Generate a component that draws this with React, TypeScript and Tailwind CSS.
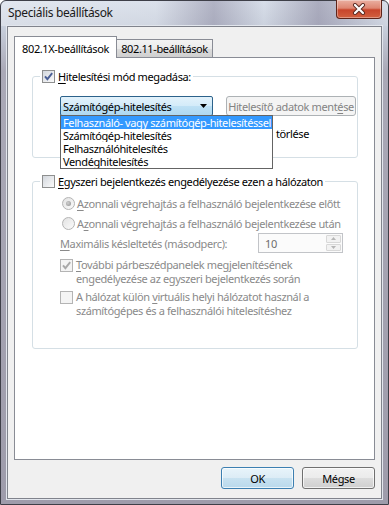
import React from 'react';

const F = "font-['Noto_Sans',sans-serif] text-[11px] tracking-[-0.38px] leading-[15px] whitespace-nowrap";
const GRAY = 'text-[#8a8a8a]';

function Check({ checked, disabled }: { checked?: boolean; disabled?: boolean }) {
  return (
    <span
      className={`flex h-[13px] w-[13px] shrink-0 items-center justify-center border ${
        disabled ? 'border-[#b4b4b4] bg-[#f4f4f4]' : 'border-[#8e8f8f] bg-gradient-to-br from-[#d3d7dd] to-[#fbfbfb]'
      }`}
    >
      {checked && (
        <svg width="11" height="11" viewBox="0 0 11 11">
          <path d="M2 5.3 L4.4 8.2 L9.2 2.2" fill="none" stroke={disabled ? '#a9a9a9' : '#4b5f96'} strokeWidth="1.9" />
        </svg>
      )}
    </span>
  );
}

function Radio({ checked }: { checked?: boolean }) {
  return (
    <span className="flex h-[13px] w-[13px] shrink-0 items-center justify-center rounded-full border border-[#b4b4b4] bg-gradient-to-br from-[#e2e2e2] to-[#fbfbfb]">
      {checked && <span className="h-[5px] w-[5px] rounded-full bg-[radial-gradient(circle_at_40%_40%,#d0d0d0,#8e8e8e)]" />}
    </span>
  );
}

function U({ children }: { children: React.ReactNode }) {
  return <span className="underline underline-offset-[2px]">{children}</span>;
}

export default function App() {
  return (
    <div className={`h-[505px] w-[389px] overflow-hidden text-black ${F}`}>
      <div className="flex h-full flex-col rounded-t-[6px] border border-[#3e3f48] bg-[linear-gradient(180deg,#d5dce8_0px,#c8cfdc_26px,#aaa9b7_70px,#9e9cab_100%)]">
        {/* Title bar */}
        <div className="flex h-[25px] shrink-0 items-start justify-between rounded-t-[6px] bg-[linear-gradient(90deg,rgba(255,255,255,0.3)_0%,rgba(255,255,255,0.15)_40%,rgba(95,85,115,0.3)_55%,rgba(255,255,255,0.05)_68%,rgba(95,85,115,0.35)_82%,rgba(255,255,255,0.1)_100%)]">
          <span className="pl-[7px] pt-[4px] text-[12px] tracking-[-0.35px] text-[#1a1a1a]">Speciális beállítások</span>
          <div className="-mt-px mr-[6px] flex h-[19px] w-[46px] items-center justify-center rounded-b-[4px] border border-t-0 border-[#5e2419] bg-[linear-gradient(180deg,#eab0a2_0%,#de8672_45%,#c8452b_55%,#d2603f_100%)] shadow-[inset_0_0_0_1px_rgba(255,255,255,0.35)]">
            <svg width="14" height="12" viewBox="0 0 14 12">
              <path d="M3 2 L11 10 M11 2 L3 10" stroke="#5a2a22" strokeWidth="4" strokeLinecap="round" />
              <path d="M3 2 L11 10 M11 2 L3 10" stroke="#ffffff" strokeWidth="2.2" strokeLinecap="round" />
            </svg>
          </div>
        </div>

        {/* Client area */}
        <div className="mx-[6px] mb-[5px] flex flex-1 flex-col border border-[#80838c] bg-[#f0f0f0] shadow-[0_0_0_1px_#e2e6ed]">
          {/* Tabs */}
          <div className="flex h-[30px] shrink-0 items-end pl-[6px]">
            <div className="relative z-10 -mb-px h-[22px] w-[103px] border border-b-0 border-[#898c95] bg-white pt-[4px] text-center">
              802.1X-beállítások
            </div>
            <div className="h-[18px] w-[96px] border border-b-0 border-l-0 border-[#898c95] bg-[linear-gradient(180deg,#f3f3f3_0%,#ebebeb_50%,#dddddd_50%,#cfcfcf_100%)] pt-[1px] text-center">
              802.11-beállítások
            </div>
          </div>

          {/* Tab panel */}
          <div className="mx-[6px] h-[403px] shrink-0 border border-[#898c95] bg-white">
            {/* Group 1 */}
            <fieldset className="ml-[17px] mt-[11px] h-[89px] w-[326px] rounded-[3px] border border-[#d5dfe5] pl-[7px]">
              <legend className="flex h-[15px] items-center gap-[3px] px-[2px]">
                <Check checked />
                <span>
                  <U>H</U>itelesítési mód megadása:
                </span>
              </legend>
              <div className="ml-[20px] mt-[12px] flex items-start">
                <div className="relative z-10">
                  <div className="flex h-[20px] w-[153px] items-center justify-between rounded-[2px] border border-[#2c628b] bg-[linear-gradient(180deg,#e3f2fb_0%,#d3ebf9_50%,#bfe1f5_50%,#aed8f1_100%)] pl-[2px] pr-[5px]">
                    <span>Számítógép-hitelesítés</span>
                    <svg width="7" height="4" viewBox="0 0 7 4">
                      <path d="M0 0 H7 L3.5 4 Z" fill="#000" />
                    </svg>
                  </div>
                  <div className="absolute left-0 top-[19px] w-[213px] border border-[#646464] bg-white">
                    <div className="h-[13px] overflow-hidden bg-[#3399ff] pl-[2px] leading-[13px] text-white">Felhasználó- vagy számítógép-hitelesítéssel</div>
                    <div className="h-[13px] overflow-hidden pl-[2px] leading-[13px]">Számítógép-hitelesítés</div>
                    <div className="h-[13px] overflow-hidden pl-[2px] leading-[13px]">Felhasználóhitelesítés</div>
                    <div className="h-[13px] overflow-hidden pl-[2px] leading-[13px]">Vendéghitelesítés</div>
                  </div>
                </div>
                <div className="ml-[13px] flex h-[20px] w-[130px] items-center justify-center rounded-[3px] border border-[#adb2b5] bg-[#f4f4f4] text-[#838383]">
                  <span>
                    Hitelesítő adatok ment<U>é</U>se
                  </span>
                </div>
              </div>
              {/* only the end of this row shows past the open list */}
              <div className="ml-[20px] mt-[10px] flex w-[249px] justify-end">
                <span>törlése</span>
              </div>
            </fieldset>

            {/* Group 2 */}
            <fieldset className="ml-[17px] mt-[16px] h-[175px] w-[326px] rounded-[3px] border border-[#d5dfe5] pl-[7px]">
              <legend className="flex h-[15px] items-center gap-[3px] px-[2px]">
                <Check />
                <span>
                  <U>E</U>gyszeri bejelentkezés engedélyezése ezen a hálózaton
                </span>
              </legend>
              <div className={`ml-[22px] mt-[4px] flex h-[20px] items-center gap-[2px] ${GRAY}`}>
                <Radio checked />
                <span>
                  <U>A</U>zonnali végrehajtás a felhasználó bejelentkezése előtt
                </span>
              </div>
              <div className={`ml-[22px] flex h-[20px] items-center gap-[2px] ${GRAY}`}>
                <Radio />
                <span>
                  A<U>z</U>onnali végrehajtás a felhasználó bejelentkezése után
                </span>
              </div>
              <div className={`ml-[20px] flex h-[20px] items-center ${GRAY}`}>
                <span className="w-[198px]">
                  <U>M</U>aximális késleltetés (másodperc):
                </span>
                <div className="flex h-[20px] w-[85px] items-stretch border border-[#c2c4c8] bg-[#fbfbfb]">
                  <span className="flex flex-1 items-center pl-[6px] text-[#6d6d6d]">10</span>
                  <div className="flex w-[16px] flex-col gap-px py-px pr-px">
                    <div className="flex flex-1 items-center justify-center rounded-[1px] border border-[#d8d8d8] bg-[#f2f2f2]">
                      <svg width="5" height="3" viewBox="0 0 5 3"><path d="M0 3 H5 L2.5 0 Z" fill="#b6b6b6" /></svg>
                    </div>
                    <div className="flex flex-1 items-center justify-center rounded-[1px] border border-[#d8d8d8] bg-[#f2f2f2]">
                      <svg width="5" height="3" viewBox="0 0 5 3"><path d="M0 0 H5 L2.5 3 Z" fill="#b6b6b6" /></svg>
                    </div>
                  </div>
                </div>
              </div>
              <div className={`ml-[20px] mt-[5px] flex gap-[3px] leading-[14px] ${GRAY}`}>
                <span className="pt-px">
                  <Check checked disabled />
                </span>
                <span>
                  <U>T</U>ovábbi párbeszédpanelek megjelenítésének
                  <br />
                  engedélyezése az egyszeri bejelentkezés során
                </span>
              </div>
              <div className={`ml-[20px] mt-[4px] flex gap-[3px] leading-[14px] ${GRAY}`}>
                <span className="pt-px">
                  <Check disabled />
                </span>
                <span>
                  A hálózat külön <U>v</U>irtuális helyi hálózatot használ a
                  <br />
                  számítógépes és a felhasználói hitelesítéshez
                </span>
              </div>
            </fieldset>
          </div>

          {/* Buttons */}
          <div className="mt-[7px] flex justify-end gap-[8px] pr-[6px]">
            <button className="h-[22px] w-[73px] rounded-[3px] border border-[#3c7fb1] bg-[linear-gradient(180deg,#e8f4fb_0%,#dcecf6_50%,#c8e2f1_50%,#b9d9ec_100%)] shadow-[inset_0_0_0_1px_rgba(255,255,255,0.7)]">
              OK
            </button>
            <button className="h-[22px] w-[73px] rounded-[3px] border border-[#707070] bg-[linear-gradient(180deg,#f2f2f2_0%,#ebebeb_50%,#dddddd_50%,#cfcfcf_100%)] shadow-[inset_0_0_0_1px_rgba(255,255,255,0.7)]">
              Mégse
            </button>
          </div>
        </div>
      </div>
    </div>
  );
}
